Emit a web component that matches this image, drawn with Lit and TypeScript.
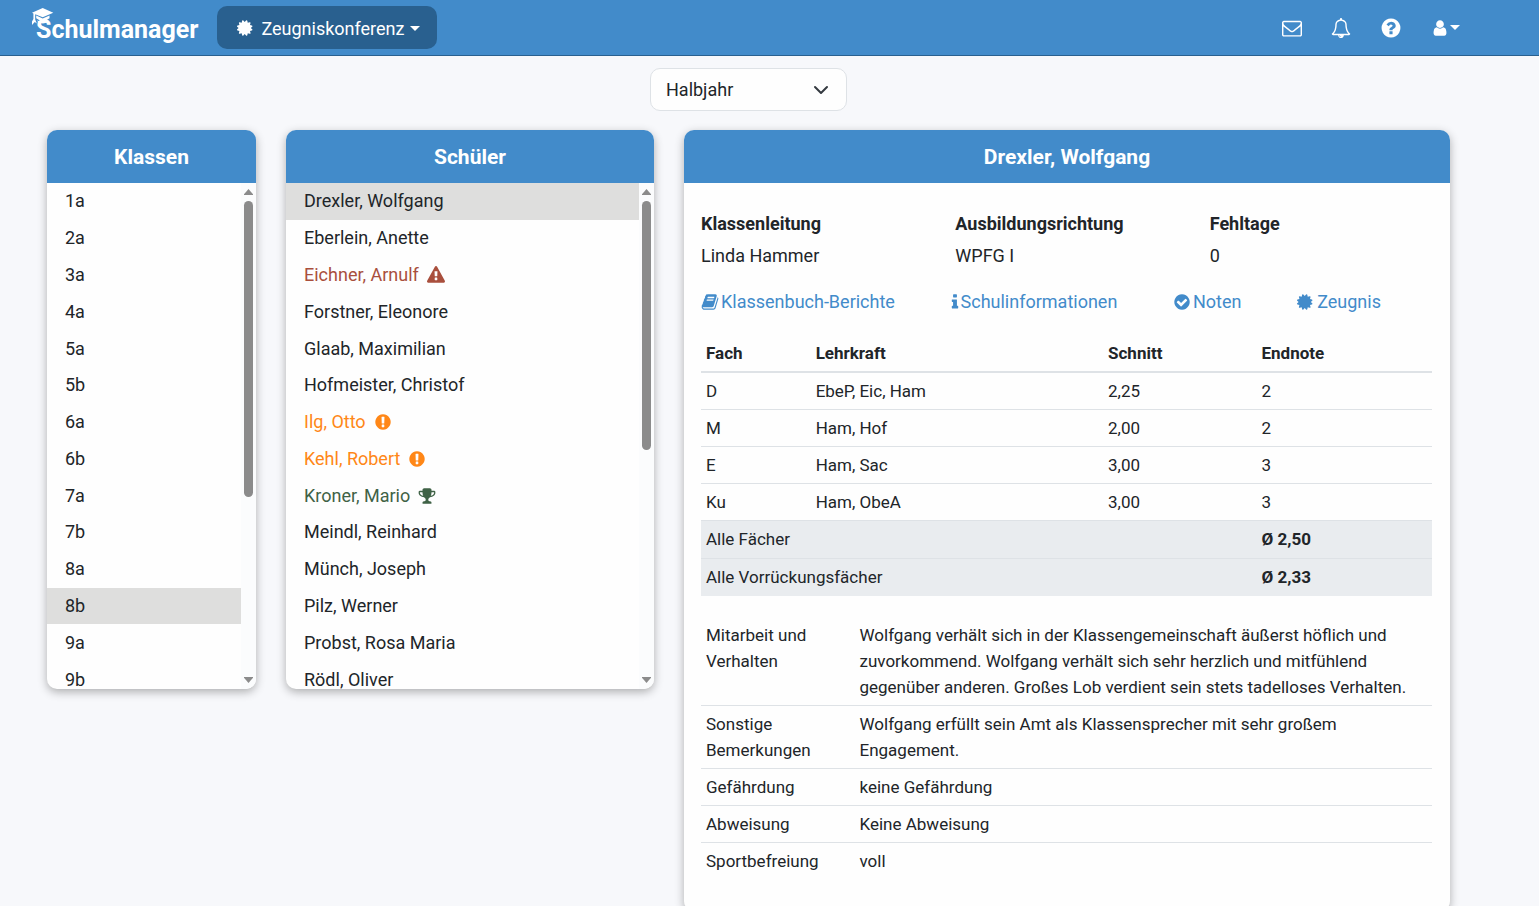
import { LitElement, html, css, svg } from "lit";
import { customElement, property, state } from "lit/decorators.js";
import { classMap } from "lit/directives/class-map.js";
import { styleMap } from "lit/directives/style-map.js";

const GLYPHS: Record<string, string> = {
  certificate:
    "M1376 896l138 135q30 28 20 70-12 41-52 51l-188 48 53 186q12 41-19 70-29 31-70 19l-186-53-48 188q-10 40-51 52-12 2-19 2-31 0-51-22l-135-138-135 138q-28 30-70 20-41-11-51-52l-48-188-186 53q-41 12-70-19-31-29-19-70l53-186-188-48q-40-10-52-51-10-42 20-70l138-135-138-135q-30-28-20-70 12-41 52-51l188-48-53-186q-12-41 19-70 29-31 70-19l186 53 48-188q10-41 51-51 41-12 70 19l135 139 135-139q29-30 70-19 41 10 51 51l48 188 186-53q41-12 70 19 31 29 19 70l-53 186 188 48q40 10 52 51 10 42-20 70z",
  envelope:
    "M1664 1504v-768q-32 36-69 66-268 206-426 338-51 43-83 67t-86.500 48.500-102.500 24.500h-2q-48 0-102.500-24.500t-86.500-48.500-83-67q-158-132-426-338-37-30-69-66v768q0 13 9.500 22.500t22.500 9.500h1472q13 0 22.500-9.500t9.500-22.500zm0-1051v-24.500l-.5-13-3-12.500-5.500-9-9-7.500-14-2.500h-1472q-13 0-22.500 9.500t-9.500 22.500q0 168 147 284 193 152 401 317 6 5 35 29.500t46 37.500 44.500 31.500 50.500 27.500 43 9h2q20 0 43-9t50.500-27.500 44.500-31.500 46-37.500 35-29.500q208-165 401-317 54-43 100.500-115.500t46.500-131.500zm128-37v1088q0 66-47 113t-113 47h-1472q-66 0-113-47t-47-113v-1088q0-66 47-113t113-47h1472q66 0 113 47t47 113z",
  bell:
    "M912 1696q0-16-16-16-59 0-101.500-42.500t-42.500-101.500q0-16-16-16t-16 16q0 73 51.500 124.500t124.500 51.500q16 0 16-16zm-666-288h1300q-266-300-266-832 0-51-24-105t-69-103-121.500-80.500-169.500-31.500-169.500 31.500-121.500 80.500-69 103-24 105q0 532-266 832zm1482 0q0 52-38 90t-90 38h-448q0 106-75 181t-181 75-181-75-75-181h-448q-52 0-90-38t-38-90q50-42 91-88t85-119.500 74.500-158.500 50-206 19.500-260q0-152 117-282.500t307-158.500q-8-19-8-39 0-40 28-68t68-28 68 28 28 68q0 20-8 39 190 28 307 158.500t117 282.500q0 139 19.500 260t50 206 74.500 158.500 85 119.500 91 88z",
  question:
    "M1024 1376v-192q0-14-9-23t-23-9h-192q-14 0-23 9t-9 23v192q0 14 9 23t23 9h192q14 0 23-9t9-23zm256-672q0-88-55.500-163t-138.500-116-170-41q-243 0-371 213-15 24 8 42l132 100q7 6 19 6 16 0 25-12 53-68 86-92 34-24 86-24 48 0 85.500 26t37.500 59q0 38-20 61t-68 45q-63 28-115.500 86.500t-52.500 125.500v36q0 14 9 23t23 9h192q14 0 23-9t9-23q0-19 21.500-49.500t54.500-49.500q32-18 49-28.500t46-35 44.500-48 28-60.500 12.500-81zm384 192q0 209-103 385.500t-279.500 279.500-385.500 103-385.500-103-279.500-279.500-103-385.500 103-385.500 279.500-279.500 385.500-103 385.500 103 279.500 279.500 103 385.500z",
  alert:
    "M896 128q209 0 385.500 103t279.500 279.500 103 385.500-103 385.500-279.500 279.500-385.500 103-385.500-103-279.500-279.500-103-385.500 103-385.500 279.500-279.500 385.500-103zm128 1247v-190q0-14-9-23.500t-22-9.500h-192q-13 0-23 10t-10 23v190q0 13 10 23t23 10h192q13 0 22-9.500t9-23.500zm-2-344l18-621q0-12-10-18-10-8-24-8h-220q-14 0-24 8-10 6-10 18l17 621q0 10 10 17.500t24 7.500h185q14 0 23.500-7.500t10.500-17.500z",
  warning:
    "M1024 1375v-190q0-14-9.500-23.500t-22.500-9.500h-192q-13 0-22.500 9.500t-9.500 23.500v190q0 14 9.500 23.500t22.500 9.500h192q13 0 22.500-9.500t9.500-23.500zm-2-374l18-459q0-12-10-19-13-11-24-11h-220q-11 0-24 11-10 7-10 21l17 457q0 10 10 16.500t24 6.500h185q14 0 23.500-6.500t10.500-16.500zm-14-934l768 1408q35 63-2 126-17 29-46.500 46t-63.500 17h-1536q-34 0-63.500-17t-46.500-46q-37-63-2-126l768-1408q17-31 47-49t65-18 65 18 47 49z",
  check:
    "M1412 734q0-28-18-46l-91-90q-19-19-45-19t-45 19l-408 407-226-226q-19-19-45-19t-45 19l-91 90q-18 18-18 46 0 27 18 45l362 362q19 19 45 19 27 0 46-19l543-543q18-18 18-45zm252 162q0 209-103 385.500t-279.500 279.500-385.500 103-385.500-103-279.500-279.500-103-385.500 103-385.500 279.500-279.500 385.500-103 385.500 103 279.500 279.500 103 385.500z",
  user:
    "M1536 1399q0 109-62.500 187t-150.500 78h-854q-88 0-150.500-78t-62.500-187q0-85 8.500-160.500t31.500-152 58.500-131 94-89 134.500-34.500q131 128 313 128t313-128q76 0 134.500 34.500t94 89 58.500 131 31.500 152 8.500 160.500zm-256-887q0 159-112.500 271.500t-271.500 112.500-271.500-112.500-112.500-271.500 112.500-271.500 271.500-112.500 271.500 112.500 112.500 271.500z",
  trophy:
    "M522 883q-74-162-74-371h-256v96q0 78 94.500 162t235.500 113zm1078-275v-96h-256q0 209-74 371 141-29 235.500-113t94.500-162zm128-128v128q0 71-41.500 143t-112 130-173 97.500-215.500 44.500q-42 54-95 95-38 34-52.500 72.500t-14.500 89.500q0 54 30.500 91t97.500 37q75 0 133.500 45.500t58.500 114.500v64q0 14-9 23t-23 9h-832q-14 0-23-9t-9-23v-64q0-69 58.500-114.500t133.500-45.500q67 0 97.500-37t30.500-91q0-51-14.500-89.500t-52.500-72.500q-53-41-95-95-113-5-215.500-44.500t-173-97.500-112-130-41.500-143v-128q0-40 28-68t68-28h288v-96q0-66 47-113t113-47h576q66 0 113 47t47 113v96h288q40 0 68 28t28 68z",
  info:
    "M1216 1344v128q0 26-19 45t-45 19h-512q-26 0-45-19t-19-45v-128q0-26 19-45t45-19h64v-384h-64q-26 0-45-19t-19-45v-128q0-26 19-45t45-19h384q26 0 45 19t19 45v576h64q26 0 45 19t19 45zm-128-1152v192q0 26-19 45t-45 19h-256q-26 0-45-19t-19-45v-192q0-26 19-45t45-19h256q26 0 45 19t19 45z",
  book:
    "M1703 478q40 57 18 129l-275 906q-19 64-76.500 107.500t-122.500 43.500h-923q-77 0-148.500-53.500t-99.500-131.500q-24-67-2-127 0-4 3-27t4-37q1-8-3-21.500t-3-19.500q2-11 8-21t16.500-23.500 16.500-23.500q23-38 45-91.500t30-91.500q3-10 .5-30t-.5-28q3-11 17-28t17-23q21-36 42-92t25-90q1-9-2.500-32t.5-28q4-13 22-30.500t22-22.500q19-26 42.500-84.500t27.500-96.500q1-8-3-25.500t-2-26.500q2-8 9-18t18-23 17-21q8-12 16.500-30.500t15-35 16-36 19.500-32 26.500-23.500 36-11.500 47.500 5.500l-1 3q38-9 51-9h761q74 0 114 56t18 130l-274 906q-36 119-71.500 153.500t-128.500 34.500h-869q-27 0-38 15-11 16-1 43 24 70 144 70h923q29 0 56-15.500t35-41.500l300-987q7-22 5-57 38 15 59 43zm-1064 2q-4 13 2 22.500t20 9.500h608q13 0 25.500-9.500t16.500-22.500l21-64q4-13-2-22.500t-20-9.500h-608q-13 0-25.500 9.500t-16.500 22.500zm-83 256q-4 13 2 22.500t20 9.500h608q13 0 25.500-9.500t16.500-22.500l21-64q4-13-2-22.500t-20-9.500h-608q-13 0-25.500 9.500t-16.500 22.500z",
};

@customElement("sm-icon")
export class SmIcon extends LitElement {
  @property() name = "";

  static styles = css`
    :host {
      display: inline-flex;
      width: 18px;
      height: 18px;
      flex: none;
    }
    .glyph {
      width: 100%;
      height: 100%;
      fill: currentColor;
      overflow: visible;
    }
  `;

  render() {
    const box = this.name === "info" ? "576 0 640 1792" : "0 0 1792 1792";
    return html`<svg class="glyph" viewBox=${box} aria-hidden="true">
      ${svg`<path d=${GLYPHS[this.name] ?? ""}></path>`}
    </svg>`;
  }
}

interface Entry {
  label: string;
  tone?: string;
  icon?: string;
}

@customElement("sm-list-panel")
export class SmListPanel extends LitElement {
  @property() heading = "";
  @property({ attribute: false }) entries: Entry[] = [];
  @property({ type: Number }) selected = 0;
  @property({ type: Number }) visibleShare = 60;

  static styles = css`
    :host {
      display: flex;
      flex-direction: column;
      overflow: hidden;
      background: #fefefe;
      border-radius: 10px;
      box-shadow: 0 3px 10px rgba(0, 0, 0, 0.3);
    }
    .heading {
      margin: 0;
      padding: 14px 16px 12px;
      background: #428bca;
      color: #fff;
      font-size: 21px;
      line-height: 27px;
      font-weight: 700;
      text-align: center;
    }
    .body {
      display: flex;
      height: 506px;
    }
    .viewport {
      flex: 1;
      overflow: hidden;
    }
    .list {
      display: flex;
      flex-direction: column;
      height: 515px;
      margin: 0;
      padding: 0;
      list-style: none;
    }
    .item {
      display: flex;
      flex: 1;
    }
    .entry {
      display: flex;
      align-items: center;
      gap: 8px;
      width: 100%;
      padding: 0 18px;
      border: 0;
      background: none;
      color: #212529;
      font: inherit;
      line-height: 26px;
      text-align: left;
      white-space: nowrap;
      cursor: pointer;
    }
    .entry.active {
      background: #dededd;
    }
    .entry.danger {
      color: #a94f3d;
    }
    .entry.caution {
      color: #ff8717;
    }
    .entry.praise {
      color: #3f6246;
    }
    .scrollbar {
      display: flex;
      flex-direction: column;
      align-items: center;
      gap: 6px;
      width: 15px;
      padding: 6px 0;
      box-sizing: border-box;
      background: #fbfcfd;
    }
    .track {
      flex: 1;
      width: 9px;
    }
    .thumb {
      border-radius: 5px;
      background: #8b8b8b;
    }
    .arrow {
      width: 9px;
      height: 6px;
      fill: #8b8b8b;
    }
  `;

  render() {
    return html`
      <h2 class="heading">${this.heading}</h2>
      <div class="body">
        <div class="viewport">
          <ul class="list">
            ${this.entries.map(
              (e, i) => html`<li class="item">
                <button
                  class=${classMap({
                    entry: true,
                    active: i === this.selected,
                    [e.tone ?? "plain"]: true,
                  })}
                  type="button"
                  @click=${() => (this.selected = i)}
                >
                  ${e.label}${e.icon ? html`<sm-icon name=${e.icon}></sm-icon>` : ""}
                </button>
              </li>`
            )}
          </ul>
        </div>
        <div class="scrollbar" aria-hidden="true">
          <svg class="arrow" viewBox="0 0 9 6"><path d="M4.500 0L9 5.200V6H0V5.200z"></path></svg>
          <div class="track">
            <div class="thumb" style=${styleMap({ height: `${this.visibleShare}%` })}></div>
          </div>
          <svg class="arrow" viewBox="0 0 9 6"><path d="M4.500 6L9 .8V0H0V.8z"></path></svg>
        </div>
      </div>
    `;
  }
}

@customElement("sm-report")
export class SmReport extends LitElement {
  static styles = css`
    :host {
      display: block;
      overflow: hidden;
      background: #fefefe;
      border-radius: 10px;
      box-shadow: 0 3px 10px rgba(0, 0, 0, 0.3);
    }
    .heading {
      margin: 0;
      padding: 14px 16px 12px;
      background: #428bca;
      color: #fff;
      font-size: 21px;
      line-height: 27px;
      font-weight: 700;
      text-align: center;
    }
    .body {
      padding: 28px 18px 28px 17px;
    }
    .facts {
      display: grid;
      grid-template-columns: 254fr 254fr 222fr;
      margin: 0;
    }
    .facts dt {
      font-weight: 700;
      line-height: 26px;
    }
    .facts dd {
      margin: 6px 0 0;
      line-height: 26px;
    }
    .links {
      display: flex;
      justify-content: space-between;
      padding: 20px 51px 0 0;
    }
    .link {
      display: flex;
      align-items: center;
      gap: 2px;
      color: #428bca;
      line-height: 26px;
      text-decoration: none;
    }
    .link .slim {
      width: 8px;
    }
    .table {
      width: 100%;
      border-collapse: collapse;
      table-layout: fixed;
      font-size: 17px;
      line-height: 26px;
    }
    .table th,
    .table td {
      padding: 5px;
      text-align: left;
      vertical-align: top;
      font-weight: 400;
    }
    .marks {
      margin-top: 20px;
    }
    .marks thead th {
      font-weight: 700;
      border-bottom: 2px solid #dee2e6;
    }
    .marks tbody tr + tr > *,
    .remarks tr + tr > * {
      border-top: 1px solid #dee2e6;
    }
    .marks .total > * {
      padding-bottom: 6px;
      background: #e9ecef;
    }
    .marks .total .average {
      font-weight: 700;
    }
    .remarks {
      margin-top: 21px;
    }
    .subject {
      width: 15%;
    }
    .teacher {
      width: 40%;
    }
    .mean {
      width: 21%;
    }
    .topic {
      width: 21%;
    }
  `;

  private marks = [
    ["D", "EbeP, Eic, Ham", "2,25", "2"],
    ["M", "Ham, Hof", "2,00", "2"],
    ["E", "Ham, Sac", "3,00", "3"],
    ["Ku", "Ham, ObeA", "3,00", "3"],
  ];
  private totals = [
    ["Alle Fächer", "Ø 2,50"],
    ["Alle Vorrückungsfächer", "Ø 2,33"],
  ];
  private remarks = [
    [
      "Mitarbeit und Verhalten",
      "Wolfgang verhält sich in der Klassengemeinschaft äußerst höflich und zuvorkommend. Wolfgang verhält sich sehr herzlich und mitfühlend gegenüber anderen. Großes Lob verdient sein stets tadelloses Verhalten.",
    ],
    [
      "Sonstige Bemerkungen",
      "Wolfgang erfüllt sein Amt als Klassensprecher mit sehr großem Engagement.",
    ],
    ["Gefährdung", "keine Gefährdung"],
    ["Abweisung", "Keine Abweisung"],
    ["Sportbefreiung", "voll"],
  ];

  render() {
    return html`
      <h2 class="heading">Drexler, Wolfgang</h2>
      <div class="body">
        <dl class="facts">
          <div><dt>Klassenleitung</dt><dd>Linda Hammer</dd></div>
          <div><dt>Ausbildungsrichtung</dt><dd>WPFG I</dd></div>
          <div><dt>Fehltage</dt><dd>0</dd></div>
        </dl>
        <nav class="links" aria-label="Berichte">
          <a class="link" href="#klassenbuch"><sm-icon name="book"></sm-icon>Klassenbuch-Berichte</a>
          <a class="link" href="#info"><sm-icon class="slim" name="info"></sm-icon>Schulinformationen</a>
          <a class="link" href="#noten"><sm-icon name="check"></sm-icon>Noten</a>
          <a class="link" href="#zeugnis"><sm-icon name="certificate"></sm-icon>Zeugnis</a>
        </nav>
        <table class="table marks">
          <colgroup>
            <col class="subject" />
            <col class="teacher" />
            <col class="mean" />
            <col />
          </colgroup>
          <thead>
            <tr>
              <th scope="col">Fach</th>
              <th scope="col">Lehrkraft</th>
              <th scope="col">Schnitt</th>
              <th scope="col">Endnote</th>
            </tr>
          </thead>
          <tbody>
            ${this.marks.map(
              (row) => html`<tr>${row.map((cell) => html`<td>${cell}</td>`)}</tr>`
            )}
            ${this.totals.map(
              ([label, value]) => html`<tr class="total">
                <th scope="row" colspan="3">${label}</th>
                <td class="average">${value}</td>
              </tr>`
            )}
          </tbody>
        </table>
        <table class="table remarks">
          <colgroup>
            <col class="topic" />
            <col />
          </colgroup>
          <tbody>
            ${this.remarks.map(
              ([topic, text]) => html`<tr>
                <th scope="row">${topic}</th>
                <td>${text}</td>
              </tr>`
            )}
          </tbody>
        </table>
      </div>
    `;
  }
}

@customElement("app-root")
export class AppRoot extends LitElement {
  @state() private classes: Entry[] = [
    "1a", "2a", "3a", "4a", "5a", "5b", "6a", "6b", "7a", "7b", "8a", "8b", "9a", "9b",
  ].map((label) => ({ label }));

  @state() private pupils: Entry[] = [
    { label: "Drexler, Wolfgang" },
    { label: "Eberlein, Anette" },
    { label: "Eichner, Arnulf", tone: "danger", icon: "warning" },
    { label: "Forstner, Eleonore" },
    { label: "Glaab, Maximilian" },
    { label: "Hofmeister, Christof" },
    { label: "Ilg, Otto", tone: "caution", icon: "alert" },
    { label: "Kehl, Robert", tone: "caution", icon: "alert" },
    { label: "Kroner, Mario", tone: "praise", icon: "trophy" },
    { label: "Meindl, Reinhard" },
    { label: "Münch, Joseph" },
    { label: "Pilz, Werner" },
    { label: "Probst, Rosa Maria" },
    { label: "Rödl, Oliver" },
  ];

  static styles = css`
    :host {
      display: block;
      height: 100vh;
      overflow: hidden;
      background: #f7f8fb;
      color: #212529;
      font-family: Roboto, "Liberation Sans", sans-serif;
      font-size: 18px;
    }
    .topbar {
      display: flex;
      align-items: center;
      height: 55px;
      padding: 0 79px 0 32px;
      background: #428bca;
      border-bottom: 1px solid #29608f;
      color: #fff;
    }
    .brand {
      position: relative;
      padding: 4px 0 0 4px;
      color: #fff;
      font-size: 25px;
      line-height: 32px;
      font-weight: 700;
      text-decoration: none;
    }
    .cap {
      position: absolute;
      left: 0;
      top: -2px;
      width: 22px;
      height: 18px;
      fill: #fff;
    }
    .module {
      display: flex;
      align-items: center;
      gap: 6px;
      height: 43px;
      margin-left: 19px;
      padding: 1px 17px 0 20px;
      border: 0;
      border-radius: 10px;
      background: #29608f;
      color: #fff;
      font: inherit;
    }
    .caret {
      width: 10px;
      height: 5px;
      fill: currentColor;
    }
    .tools {
      display: flex;
      align-items: center;
      gap: 29px;
      margin-left: auto;
    }
    .tool {
      display: flex;
      align-items: center;
      gap: 1px;
      padding: 0;
      border: 0;
      background: none;
      color: #fff;
    }
    .tool .wide {
      width: 20px;
      height: 20px;
    }
    .tool .large {
      width: 22px;
      height: 22px;
    }
    .period {
      display: flex;
      justify-content: center;
      padding: 12px 89px 19px 47px;
    }
    .select {
      width: 197px;
      height: 43px;
      padding: 0 15px;
      border: 1px solid #dee2e6;
      border-radius: 10px;
      appearance: none;
      background: #fefefe
        url("data:image/svg+xml,%3Csvg xmlns='http://www.w3.org/2000/svg' viewBox='0 0 16 16'%3E%3Cpath fill='none' stroke='%23343a40' stroke-linecap='round' stroke-linejoin='round' stroke-width='2' d='m2 5 6 6 6-6'/%3E%3C/svg%3E")
        no-repeat right 17px center / 16px 16px;
      color: #212529;
      font: inherit;
    }
    .board {
      display: grid;
      grid-template-columns: 209fr 368fr 766fr;
      gap: 30px;
      align-items: start;
      padding: 0 89px 0 47px;
    }
    .report {
      padding-bottom: 4px;
    }
  `;

  private caret() {
    return html`<svg class="caret" viewBox="0 0 10 5" aria-hidden="true">
      <path d="M0 0H10L5 5z"></path>
    </svg>`;
  }

  render() {
    return html`
      <header class="topbar">
        <a class="brand" href="#start">
          <svg class="cap" viewBox="0 0 22 18" aria-hidden="true">
            <path d="M0 4.700L10.700 0l10.600 4.700-10.600 4.500L3.200 6.200v5.200l1.600 4-2-1.400-1 1-1.800 2v-3.500l1.400-2.500V5.400z"></path>
            <path d="M4.200 7.600l6.500 2.800 6.800-2.800v2.600q-6.800 5.200-13.300 0z"></path>
            <path d="M5 12.200q5.700 3.600 11.800.2l-1 2-5 1-4.600-1.200z"></path>
          </svg>
          Schulmanager
        </a>
        <button class="module" type="button">
          <sm-icon name="certificate"></sm-icon>
          Zeugniskonferenz ${this.caret()}
        </button>
        <nav class="tools" aria-label="Konto">
          <button class="tool" type="button" aria-label="Nachrichten">
            <sm-icon class="wide" name="envelope"></sm-icon>
          </button>
          <button class="tool" type="button" aria-label="Mitteilungen">
            <sm-icon class="wide" name="bell"></sm-icon>
          </button>
          <button class="tool" type="button" aria-label="Hilfe">
            <sm-icon class="large" name="question"></sm-icon>
          </button>
          <button class="tool" type="button" aria-label="Benutzer">
            <sm-icon name="user"></sm-icon>${this.caret()}
          </button>
        </nav>
      </header>
      <main>
        <div class="period">
          <select class="select" aria-label="Zeitraum">
            <option>Halbjahr</option>
          </select>
        </div>
        <div class="board">
          <sm-list-panel
            heading="Klassen"
            .entries=${this.classes}
            .selected=${11}
            .visibleShare=${63}
          ></sm-list-panel>
          <sm-list-panel
            heading="Schüler"
            .entries=${this.pupils}
            .selected=${0}
            .visibleShare=${53}
          ></sm-list-panel>
          <sm-report class="report"></sm-report>
        </div>
      </main>
    `;
  }
}
